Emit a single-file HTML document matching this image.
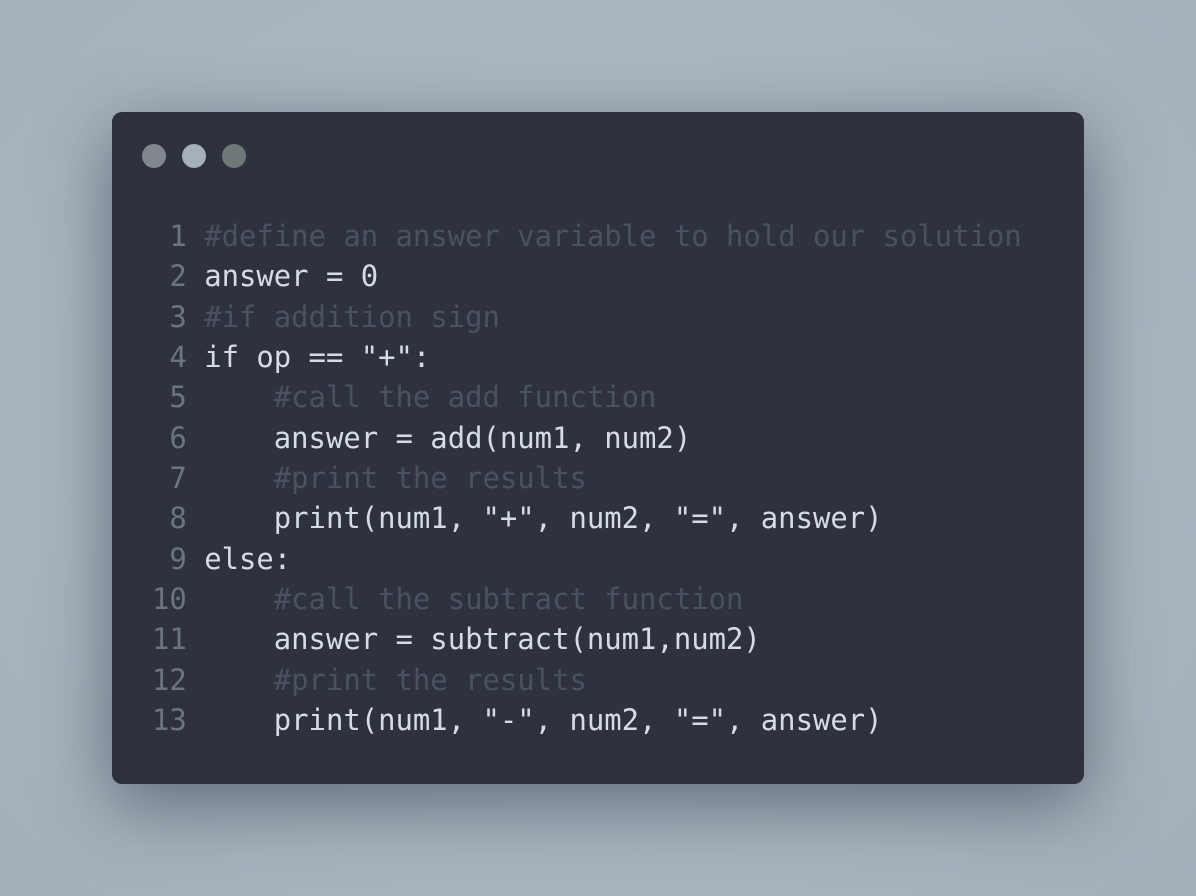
<!DOCTYPE html>
<html><head><style>
html,body{margin:0;padding:0;width:1196px;height:896px;overflow:hidden;background:#aab5bf;}
body{background:radial-gradient(ellipse at 50% 45%,#b2bcc6 0%,#a8b3be 70%,#a3aeb9 100%);}
.card{position:absolute;left:112px;top:112px;width:972px;height:672px;background:#2e323e;border-radius:10px;box-shadow:0 20px 70px rgba(40,50,65,0.55);}
.dot{position:absolute;top:32px;width:24px;height:24px;border-radius:50%;}
pre{position:absolute;left:40px;top:104px;margin:0;font-family:"DejaVu Sans Mono","Liberation Mono",monospace;font-size:28.9px;line-height:40.35px;color:#d6dce4;}
.n{color:#6c747e}.c{color:#4a5261}
</style></head><body>
<div class="card">
<div class="dot" style="left:30px;background:#80878f"></div>
<div class="dot" style="left:70px;background:#a6b0b8"></div>
<div class="dot" style="left:110px;background:#6e7878"></div>
<pre><span class="n"> 1</span> <span class="c">#define an answer variable to hold our solution</span>
<span class="n"> 2</span> answer = 0
<span class="n"> 3</span> <span class="c">#if addition sign</span>
<span class="n"> 4</span> if op == "+":
<span class="n"> 5</span>     <span class="c">#call the add function</span>
<span class="n"> 6</span>     answer = add(num1, num2)
<span class="n"> 7</span>     <span class="c">#print the results</span>
<span class="n"> 8</span>     print(num1, "+", num2, "=", answer)
<span class="n"> 9</span> else:
<span class="n">10</span>     <span class="c">#call the subtract function</span>
<span class="n">11</span>     answer = subtract(num1,num2)
<span class="n">12</span>     <span class="c">#print the results</span>
<span class="n">13</span>     print(num1, "-", num2, "=", answer)</pre>
</div>
</body></html>
